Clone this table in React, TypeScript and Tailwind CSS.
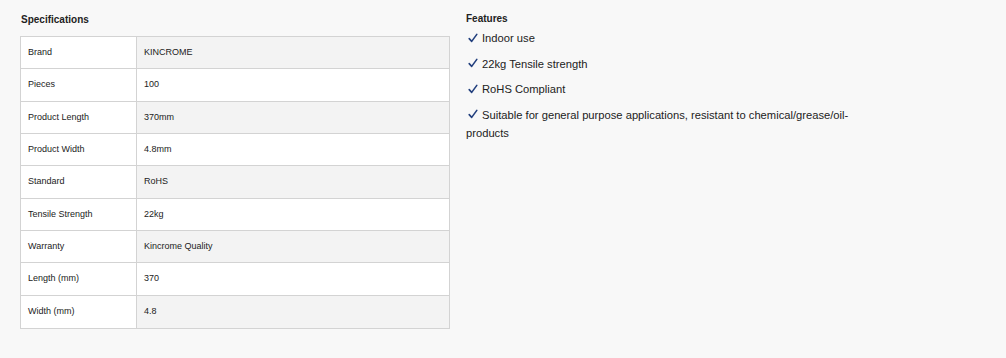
const specs: [string, string][] = [
  ["Brand", "KINCROME"],
  ["Pieces", "100"],
  ["Product Length", "370mm"],
  ["Product Width", "4.8mm"],
  ["Standard", "RoHS"],
  ["Tensile Strength", "22kg"],
  ["Warranty", "Kincrome Quality"],
  ["Length (mm)", "370"],
  ["Width (mm)", "4.8"],
];

const features = [
  "Indoor use",
  "22kg Tensile strength",
  "RoHS Compliant",
  "Suitable for general purpose applications, resistant to chemical/grease/oil-products",
];

function Tick() {
  return (
    <svg
      width="10"
      height="10"
      viewBox="0 0 10 10"
      fill="none"
      stroke="#23407e"
      strokeWidth="1.6"
      strokeLinecap="round"
      strokeLinejoin="round"
      className="mr-[4px] ml-[2px] inline-block align-[-0.5px]"
      aria-hidden="true"
    >
      <path d="M1.2 5.6 L3.7 8.4 L8.8 1.4" />
    </svg>
  );
}

export default function App() {
  return (
    <div className="min-h-[358px] w-full bg-[#f8f8f8] font-['Liberation_Sans',Arial,sans-serif] text-[#222]">
      <div className="flex gap-4 pl-5 pt-[14px]">
        {/* Specifications table */}
        <section className="w-[430px] shrink-0">
          <h3 className="pl-px text-[10px] font-bold leading-[12px]">Specifications</h3>
          <div className="mt-[10px] border border-[#d3d3d3] bg-white">
            {specs.map(([label, value], i) => (
              <div
                key={label}
                className={`flex h-[32.33px] text-[9px] ${i < specs.length - 1 ? "border-b border-[#d3d3d3]" : ""}`}
              >
                <div className="flex w-[116px] shrink-0 items-center border-r border-[#d3d3d3] bg-white pl-[7px]">
                  {label}
                </div>
                <div
                  className={`flex flex-1 items-center pl-[7px] ${i % 2 === 0 ? "bg-[#f3f3f3]" : "bg-white"}`}
                >
                  {value}
                </div>
              </div>
            ))}
          </div>
        </section>

        {/* Feature list */}
        <section className="w-[400px]">
          <h3 className="text-[10px] font-bold leading-[10px]">Features</h3>
          <ul className="mt-[5px] flex flex-col gap-[7.5px] text-[11.2px] leading-[18px]">
            {features.map((f) => (
              <li key={f}>
                <Tick />
                {f}
              </li>
            ))}
          </ul>
        </section>
      </div>
    </div>
  );
}
